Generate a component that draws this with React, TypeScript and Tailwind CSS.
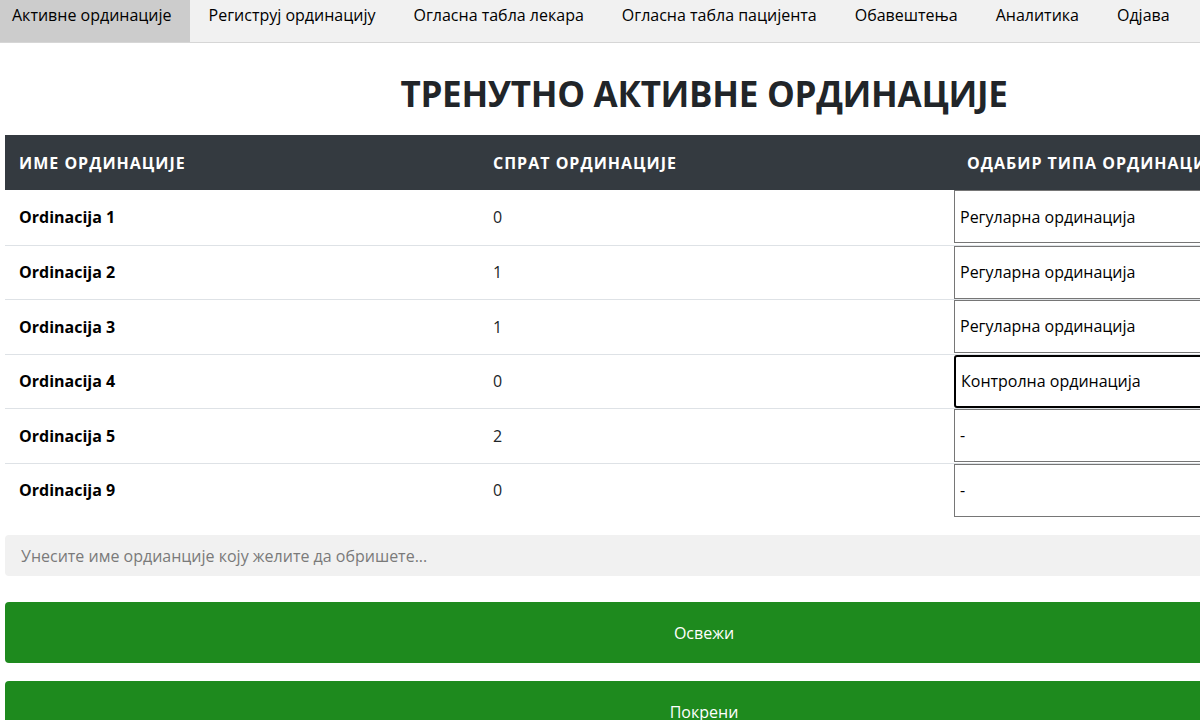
import { useState } from "react";

const tabs = [
  "Активне ординације",
  "Региструј ординацију",
  "Огласна табла лекара",
  "Огласна табла пацијента",
  "Обавештења",
  "Аналитика",
  "Одјава",
];

const rows = [
  { name: "Ordinacija 1", floor: "0", type: "Регуларна ординација" },
  { name: "Ordinacija 2", floor: "1", type: "Регуларна ординација" },
  { name: "Ordinacija 3", floor: "1", type: "Регуларна ординација" },
  { name: "Ordinacija 4", floor: "0", type: "Контролна ординација" },
  { name: "Ordinacija 5", floor: "2", type: "-" },
  { name: "Ordinacija 9", floor: "0", type: "-" },
];

export default function App() {
  const [active, setActive] = useState(0);
  const [search, setSearch] = useState("");

  return (
    <div
      className="w-[1200px] h-[720px] overflow-hidden bg-white text-[#212529]"
      style={{ fontFamily: '"Open Sans", "Noto Sans", sans-serif' }}
    >
      {/* навигација */}
      <nav className="flex h-[43px] bg-[#f1f1f1] border-b border-[#d6d6d6] w-[1408px]">
        {tabs.map((t, i) => (
          <button
            key={t}
            onClick={() => setActive(i)}
            className={`px-[19px] first:pl-[12px] first:pr-[18px] h-full text-[16px] leading-[30px] pb-[12px] text-black ${
              active === i ? "bg-[#cccccc]" : ""
            }`}
          >
            {t}
          </button>
        ))}
      </nav>

      <div className="w-[1408px] px-[5px]">
        <h1 className="text-center font-bold text-[35px] tracking-[-0.3px] h-[92px] leading-[102px] text-[#212529]">
          ТРЕНУТНО АКТИВНЕ ОРДИНАЦИЈЕ
        </h1>

        {/* табела */}
        <table className="w-full border-collapse table-fixed text-[16px]">
          <thead>
            <tr className="bg-[#343a40] text-white h-[55px]">
              <th className="w-[474px] text-left font-bold px-[14px] uppercase tracking-[1px]">Име ординације</th>
              <th className="w-[475px] text-left font-bold px-[14px] uppercase tracking-[1px]">Спрат ординације</th>
              <th className="text-left font-bold px-[13px] uppercase tracking-[1px]">Одабир типа ординације</th>
            </tr>
          </thead>
          <tbody>
            {rows.map((r, i) => (
              <tr
                key={r.name}
                className={`${i % 2 === 0 ? "h-[55px]" : "h-[54px]"} ${
                  i < rows.length - 1 ? "border-b border-[#dee2e6]" : ""
                }`}
              >
                <td className="px-[14px] font-bold text-black">{r.name}</td>
                <td className="px-[14px] text-[#212529]">{r.floor}</td>
                <td className="p-0 align-top">
                  <div
                    className={`h-[53px] flex items-center px-[5px] text-black ${
                      i === 3
                        ? "border-2 border-black rounded-[3px]"
                        : "border border-[#767676] border-r-0"
                    }`}
                  >
                    {r.type}
                  </div>
                </td>
              </tr>
            ))}
          </tbody>
        </table>

        <input
          value={search}
          onChange={(e) => setSearch(e.target.value)}
          placeholder="Унесите име ордианције коју желите да обришете..."
          className="mt-[18px] w-full h-[41px] bg-[#f1f1f1] rounded-[4px] px-[16px] text-[16px] placeholder:text-[#7a7a7a] outline-none"
        />

        <button className="mt-[26px] w-full h-[61px] bg-[#1e8a1e] rounded-[4px] text-white text-[16px]">
          Освежи
        </button>
        <button className="mt-[18px] w-full h-[61px] bg-[#1e8a1e] rounded-[4px] text-white text-[16px]">
          Покрени
        </button>
      </div>
    </div>
  );
}
